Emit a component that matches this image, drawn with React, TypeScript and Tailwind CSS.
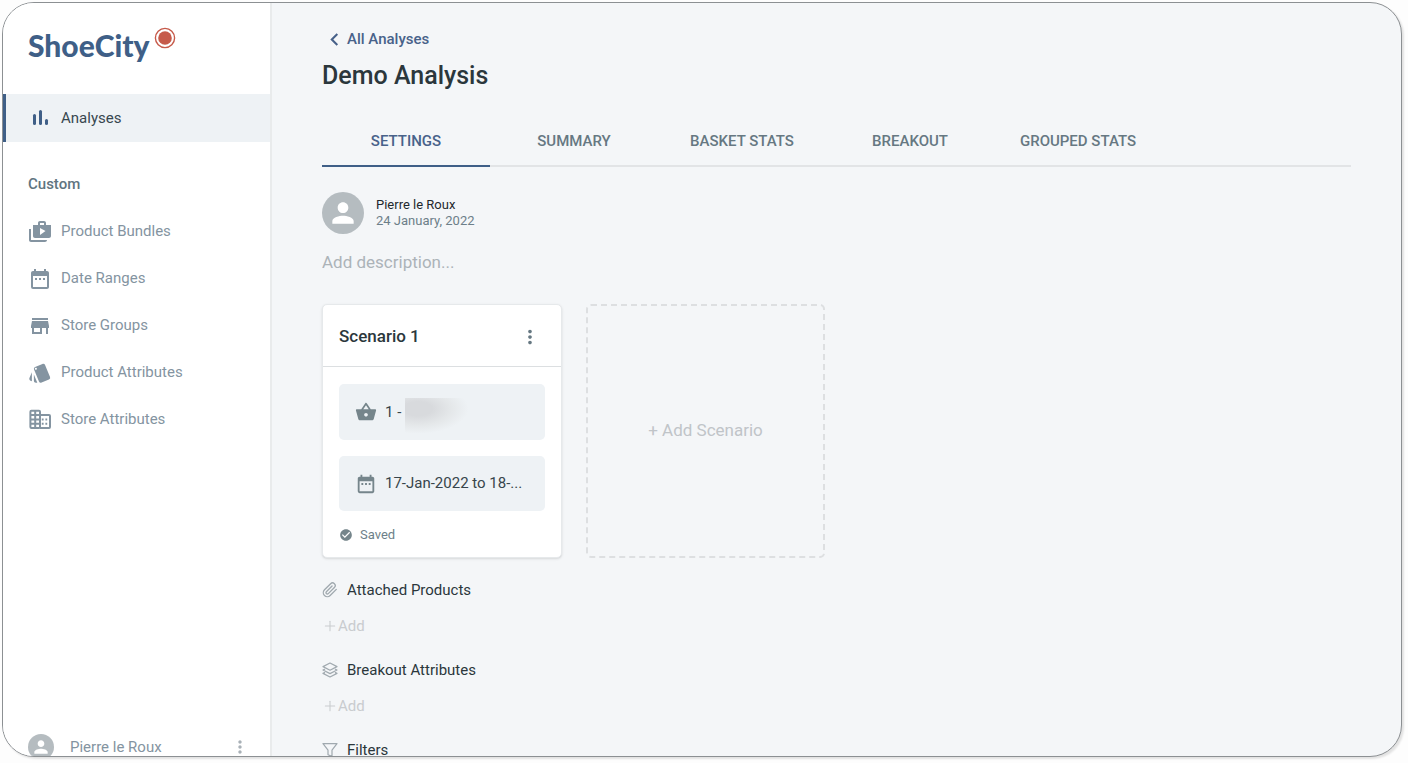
import React from "react";
import {
  MdShopTwo,
  MdDateRange,
  MdStore,
  MdStyle,
  MdPerson,
  MdMoreVert,
  MdShoppingBasket,
  MdCheckCircle,
  MdChevronLeft,
} from "react-icons/md";
import { FiPaperclip } from "react-icons/fi";
import { Plus } from "lucide-react";

function BarsIcon() {
  return (
    <svg width="24" height="24" viewBox="0 0 24 24" fill="currentColor" aria-hidden="true">
      <rect x="5" y="8" width="3" height="11" rx="1.5" />
      <rect x="11" y="4" width="3" height="15" rx="1.5" />
      <rect x="17" y="13" width="3" height="6" rx="1.5" />
    </svg>
  );
}

function OfficeIcon() {
  return (
    <svg width="24" height="24" viewBox="0 0 24 24" fill="none" stroke="currentColor" strokeWidth="2" aria-hidden="true">
      <rect x="2.4" y="2.8" width="9.6" height="17.2" rx="1" />
      <path d="M7.2 2.8V20M2.4 7.1H12M2.4 11.4H12M2.4 15.7H12" />
      <path d="M12 7.1h9a1 1 0 0 1 1 1V19a1 1 0 0 1-1 1h-9" />
      <path d="M13.8 11.4h1.8M17.4 11.4h1.8M13.8 15.7h1.8M17.4 15.7h1.8" />
    </svg>
  );
}

function LayersIcon() {
  return (
    <svg width="16" height="16" viewBox="0 0 16 16" fill="none" stroke="currentColor" strokeWidth="1.2" strokeLinejoin="round" strokeLinecap="round" aria-hidden="true">
      <path d="M8 1 15 4.6 8 8.2 1 4.6z" />
      <path d="M2.6 7.2 1 8l7 3.6L15 8l-1.6-.8" />
      <path d="M2.6 10.6 1 11.4 8 15l7-3.6-1.6-.8" />
    </svg>
  );
}

function FunnelIcon() {
  return (
    <svg width="16" height="16" viewBox="0 0 16 16" fill="none" stroke="currentColor" strokeWidth="1.2" strokeLinejoin="round" aria-hidden="true">
      <path d="M1 1.6h14L10 8.2v6.2l-4-1.6V8.2z" />
    </svg>
  );
}

const customItems = [
  { label: "Product Bundles", icon: <MdShopTwo size={24} /> },
  { label: "Date Ranges", icon: <MdDateRange size={24} /> },
  { label: "Store Groups", icon: <MdStore size={24} /> },
  { label: "Product Attributes", icon: <MdStyle size={24} /> },
  { label: "Store Attributes", icon: <OfficeIcon /> },
];

const tabs = ["SETTINGS", "SUMMARY", "BASKET STATS", "BREAKOUT", "GROUPED STATS"];

function Sidebar() {
  return (
    <aside className="flex w-[269px] shrink-0 flex-col border-r-2 border-[#e9ebec] bg-white">
      <a href="#home" className="flex h-[91px] shrink-0 items-start gap-1 pt-6 pl-[25px] text-[#3f5f87]">
        <span className="font-['Lato'] text-[30px] leading-9 font-black">ShoeCity</span>
        <svg width="22" height="22" viewBox="0 0 22 22" aria-hidden="true">
          <circle cx="11" cy="11" r="9.6" fill="none" stroke="#c65a4a" strokeWidth="1.4" />
          <circle cx="11" cy="11" r="6.8" fill="#c65a4a" />
        </svg>
      </a>
      <nav className="flex flex-col">
        <a
          href="#analyses"
          aria-current="page"
          className="flex h-12 items-center gap-[9px] border-l-3 border-[#3f5f87] bg-[#eef2f5] pl-[22px] text-[15px] text-[#37474f]"
        >
          <span className="text-[#3f5f87]"><BarsIcon /></span>
          Analyses
        </a>
        <h2 className="pt-8 pb-[14px] pl-[25px] text-[15px] leading-5 font-medium text-[#607480]">Custom</h2>
        {customItems.map(({ label, icon }) => (
          <a key={label} href="#custom" className="flex h-[47px] items-center gap-[9px] pl-[25px] text-[15px] text-[#8494a1]">
            {icon}
            {label}
          </a>
        ))}
      </nav>
      <div className="mt-auto -mb-1 flex items-center pr-5 pl-[25px] text-[15px] text-[#8494a1]">
        <span className="flex size-[26px] items-center justify-center rounded-full bg-[#b5bcc0] text-white">
          <MdPerson size={20} />
        </span>
        <span className="ml-4 flex-1">Pierre le Roux</span>
        <button type="button" aria-label="Account menu" className="text-[#a9b1b7]">
          <MdMoreVert size={20} />
        </button>
      </div>
    </aside>
  );
}

function ScenarioCard() {
  return (
    <article className="w-60 rounded-[5px] border border-[#e6e9eb] bg-white shadow-sm">
      <header className="flex h-[62px] items-center justify-between border-b border-[#dcdfe1] pt-0.5 pr-5 pl-4">
        <h2 className="text-[17px] font-medium text-[#2b373c]">Scenario 1</h2>
        <button type="button" aria-label="Scenario menu" className="text-[#667882]">
          <MdMoreVert size={22} />
        </button>
      </header>
      <div className="flex flex-col gap-4 px-4 pt-[17px] pb-[14px] text-[15px] text-[#37454b]">
        <div className="flex h-14 items-center gap-2 rounded-[5px] bg-[#eef2f5] px-4">
          <MdShoppingBasket size={22} className="shrink-0 text-[#75858b]" />
          <span>1 -</span>
          <span className="-ml-1 mb-1.5 h-9 w-16 self-end bg-radial-[at_20%_30%] from-[#d8dadd] from-20% via-[#e4e7e9] via-45% to-[#eef2f5] to-70%" />
        </div>
        <div className="flex h-[55px] items-center gap-2 rounded-[5px] bg-[#eef2f5] px-4">
          <MdDateRange size={22} className="shrink-0 text-[#75858b]" />
          <span>17-Jan-2022 to 18-...</span>
        </div>
        <p className="flex items-center gap-[7px] text-[13px] leading-4 text-[#6d7f89]">
          <MdCheckCircle size={14} className="text-[#75858b]" />
          Saved
        </p>
      </div>
    </article>
  );
}

function Section({ title, icon, add = true }: { title: string; icon: React.ReactNode; add?: boolean }) {
  return (
    <section className="flex h-20 shrink-0 flex-col items-start gap-4">
      <h2 className="flex items-center gap-[9px] text-[15px] leading-5 text-[#2b373c]">
        <span className="text-[#a0a9af]">{icon}</span>
        {title}
      </h2>
      {add && (
        <button type="button" className="flex items-center text-[15px] leading-5 text-[#c9cccf]">
          <Plus size={16} strokeWidth={1.6} />
          Add
        </button>
      )}
    </section>
  );
}

export default function App() {
  return (
    <div className="h-screen bg-[#fdfdfd] pt-0.5 pr-[6px] pb-1.5 pl-0.5 font-['Roboto',sans-serif]">
      <div className="flex h-full overflow-hidden rounded-[32px] border border-[#8c9093] bg-[#f4f6f8] shadow-[2px_2px_2px_#e2e2e2]">
        <Sidebar />
        <main className="flex min-w-0 flex-1 flex-col px-[50px] pt-[25px]">
          <a href="#analyses" className="flex h-[22px] items-center self-start text-[15px] leading-5 font-medium text-[#48628a]">
            <MdChevronLeft size={25} />
            All Analyses
          </a>
          <h1 className="mt-2.5 text-[25px] leading-8 font-medium text-[#2b373c]">Demo Analysis</h1>
          <div role="tablist" className="mt-[25px] flex h-[50px] shrink-0 border-b-2 border-[#e2e4e6]">
            {tabs.map((tab, i) => (
              <button
                key={tab}
                type="button"
                role="tab"
                aria-selected={i === 0}
                className={
                  i === 0
                    ? "-mb-0.5 w-42 border-b-2 border-[#3f5f87] text-[15px] font-medium text-[#48628a]"
                    : "-mb-0.5 w-42 border-b-2 border-transparent text-[15px] font-medium text-[#667882]"
                }
              >
                {tab}
              </button>
            ))}
          </div>
          <div className="mt-[25px] flex items-center gap-3">
            <span className="flex size-[42px] items-center justify-center rounded-full bg-[#b5bcc0] text-white">
              <MdPerson size={32} />
            </span>
            <div className="text-[13px] leading-4">
              <p className="text-[#1f292d]">Pierre le Roux</p>
              <p className="text-[#6d7f89]">24 January, 2022</p>
            </div>
          </div>
          <input
            type="text"
            aria-label="Description"
            placeholder="Add description..."
            className="mt-[17px] h-6 bg-transparent text-[17px] outline-none placeholder:text-[#acb3b8]"
          />
          <div className="mt-[29px] flex gap-6">
            <ScenarioCard />
            <button type="button" className="w-[239px] rounded-[5px] border-2 border-dashed border-[#dddfe1] text-[17px] text-[#c0c4c8]">
              + Add Scenario
            </button>
          </div>
          <div className="mt-[22px] flex flex-col">
            <Section title="Attached Products" icon={<FiPaperclip size={16} />} />
            <Section title="Breakout Attributes" icon={<LayersIcon />} />
            <Section title="Filters" icon={<FunnelIcon />} add={false} />
          </div>
        </main>
      </div>
    </div>
  );
}
